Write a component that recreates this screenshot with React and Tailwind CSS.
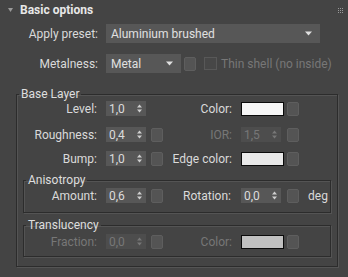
import React from 'react';

const font = { fontFamily: 'Roboto, "Liberation Sans", sans-serif' };

const Arrows = ({ dim }) => (
  <svg width="5" height="9" viewBox="0 0 5 9" className="shrink-0">
    <path d="M2.5 0.5 L5 3.5 L0 3.5 Z" fill={dim ? '#777' : '#cfcfcf'} />
    <path d="M0 5.5 L5 5.5 L2.5 8.5 Z" fill={dim ? '#777' : '#cfcfcf'} />
  </svg>
);

const Spinner = ({ value, dim }) => (
  <div className={`flex h-[15px] w-[40px] items-center justify-between pl-[3px] pr-[4px] text-[12px] ${dim ? 'bg-[#4d4d4d] text-[#777]' : 'bg-[#575757] text-[#dcdcdc]'}`}>
    <span className="leading-none">{value}</span>
    <Arrows dim={dim} />
  </div>
);

const Sq = ({ className = '' }) => (
  <div className={`h-[14px] w-[12px] rounded-[2px] border border-[#5e5e5e] bg-[#545454] ${className}`} />
);

const Swatch = ({ color }) => (
  <div className={`h-[14px] w-[43px] border border-[#0a0a0a] ${color}`} />
);

const Caret = () => (
  <svg width="7" height="5" viewBox="0 0 7 5" className="shrink-0">
    <path d="M0 0.5 L7 0.5 L3.5 4.5 Z" fill="#e0e0e0" />
  </svg>
);

const Group = ({ title, className = '', children }) => (
  <fieldset className={`border border-[#2c2c2c] shadow-[1px_1px_0_#545454,inset_1px_1px_0_#545454] ${className}`}>
    <legend className="ml-[2px] px-[2px] text-[12px] leading-[14px] text-[#dedede]">{title}</legend>
    {children}
  </fieldset>
);

export default function App() {
  return (
    <div className="h-[277px] w-[348px] overflow-hidden bg-[#444444] text-[11px] text-[#dadada]" style={font}>
      {/* header */}
      <div className="flex h-[20px] items-center">
        <svg width="5" height="4" viewBox="0 0 5 4" className="ml-[8px]">
          <path d="M0 0 L5 0 L2.5 4 Z" fill="#9a9a9a" />
        </svg>
        <span className="ml-[7px] text-[12px] font-bold text-[#e8e8e8]">Basic options</span>
        <div className="ml-auto mr-[5px] grid grid-cols-3 gap-[1px]">
          {Array.from({ length: 9 }).map((_, i) => (
            <div key={i} className="h-[1px] w-[1px] bg-[#9a9a9a]" />
          ))}
        </div>
      </div>

      {/* Apply preset */}
      <div className="mt-[4px] flex h-[19px] items-center">
        <span className="w-[98px] text-right text-[12px]">Apply preset:</span>
        <div className="ml-[8px] flex h-[19px] w-[214px] items-center justify-between bg-[#575757] pl-[5px] pr-[8px] text-[12px] text-[#e0e0e0]">
          <span>Aluminium brushed</span>
          <Caret />
        </div>
      </div>

      {/* Metalness */}
      <div className="mt-[11px] flex h-[19px] items-center">
        <span className="w-[98px] text-right text-[12px]">Metalness:</span>
        <div className="ml-[8px] flex h-[19px] w-[75px] items-center justify-between bg-[#575757] pl-[5px] pr-[8px] text-[12px] text-[#e0e0e0]">
          <span>Metal</span>
          <Caret />
        </div>
        <Sq className="ml-[3px]" />
        <div className="ml-[8px] h-[13px] w-[13px] border border-[#585858] bg-[#474747]" />
        <span className="ml-[4px] text-[12px] text-[#777]">Thin shell (no inside)</span>
      </div>

      {/* Base Layer */}
      <Group title="Base Layer" className="ml-[16px] mt-[14px] w-[322px] pb-[9px]">
        <div className="flex h-[15px] items-center">
          <span className="w-[80px] text-right text-[12px]">Level:</span>
          <div className="ml-[9px]"><Spinner value="1,0" /></div>
          <span className="ml-[17px] w-[69px] text-right text-[12px]">Color:</span>
          <div className="ml-[9px]"><Swatch color="bg-[#f6f6f6]" /></div>
          <Sq className="ml-[3px]" />
        </div>
        <div className="mt-[11px] flex h-[15px] items-center">
          <span className="w-[80px] text-right text-[12px]">Roughness:</span>
          <div className="ml-[9px]"><Spinner value="0,4" /></div>
          <Sq className="ml-[5px]" />
          <span className="w-[69px] text-right text-[12px] text-[#777]">IOR:</span>
          <div className="ml-[9px]"><Spinner value="1,5" dim /></div>
          <Sq className="ml-[6px]" />
        </div>
        <div className="mt-[9px] flex h-[15px] items-center">
          <span className="w-[80px] text-right text-[12px]">Bump:</span>
          <div className="ml-[9px]"><Spinner value="1,0" /></div>
          <Sq className="ml-[5px]" />
          <span className="w-[69px] text-right text-[12px]">Edge color:</span>
          <div className="ml-[9px]"><Swatch color="bg-[#e8e8e8]" /></div>
          <Sq className="ml-[3px]" />
        </div>

        <Group title="Anisotropy" className="ml-[6px] mt-[7px] w-[308px] pb-[9px]">
          <div className="mt-[1px] flex h-[15px] items-center">
            <span className="w-[73px] text-right text-[12px]">Amount:</span>
            <div className="ml-[9px]"><Spinner value="0,6" /></div>
            <Sq className="ml-[5px]" />
            <span className="w-[68px] text-right text-[12px]">Rotation:</span>
            <div className="ml-[10px]"><Spinner value="0,0" /></div>
            <Sq className="ml-[6px]" />
            <span className="ml-[9px] text-[12px]">deg</span>
          </div>
        </Group>

        <Group title="Translucency" className="ml-[6px] mt-[5px] w-[308px] pb-[7px]">
          <div className="mt-[2px] flex h-[15px] items-center">
            <span className="w-[73px] text-right text-[12px] text-[#777]">Fraction:</span>
            <div className="ml-[9px]"><Spinner value="0,0" dim /></div>
            <Sq className="ml-[5px]" />
            <span className="w-[69px] text-right text-[12px] text-[#777]">Color:</span>
            <div className="ml-[9px]"><Swatch color="bg-[#c0c0c0]" /></div>
            <Sq className="ml-[3px]" />
          </div>
        </Group>
      </Group>
    </div>
  );
}
